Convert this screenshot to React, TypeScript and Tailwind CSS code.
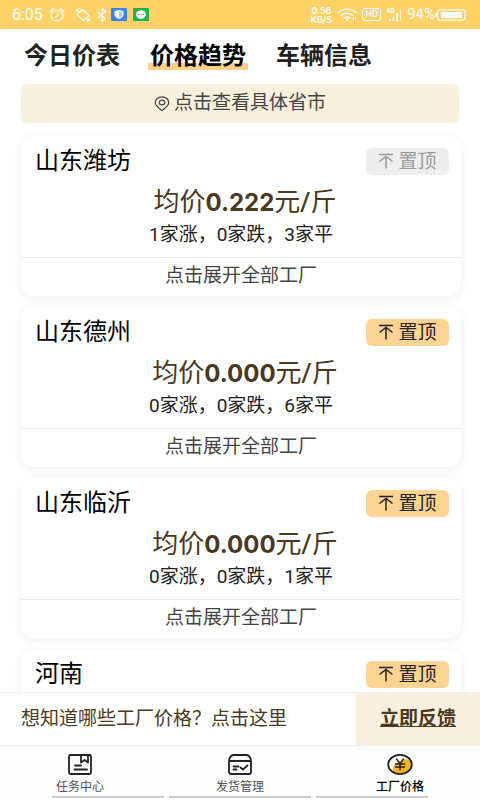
import type { ReactNode } from "react";
import clsx from "clsx";

type Trend = { price: string; up: number; down: number; flat: number };
type Factory = { name: string; pinned?: boolean; trend?: Trend };

const tabs = ["今日价表", "价格趋势", "车辆信息"];

const factories: Factory[] = [
  { name: "山东潍坊", pinned: true, trend: { price: "0.222", up: 1, down: 0, flat: 3 } },
  { name: "山东德州", trend: { price: "0.000", up: 0, down: 0, flat: 6 } },
  { name: "山东临沂", trend: { price: "0.000", up: 0, down: 0, flat: 1 } },
  { name: "河南" },
];

function StatusBar() {
  return (
    <div className="flex h-[29px] shrink-0 items-center justify-between bg-[#ffd166] pr-[14px] pl-3 text-white">
      <div className="flex items-center gap-[6px]">
        <span className="text-base">6:05</span>
        <svg className="h-4 w-4" viewBox="0 0 16 16" fill="none" stroke="currentColor" strokeWidth="1.2" strokeLinecap="round">
          <ellipse cx="8" cy="8.5" rx="6" ry="5.5" />
          <path d="M9 5.5v3L6 10.5M1 4.5l3.5-3M15 4.5l-3.5-3" />
        </svg>
        <svg className="ml-1 h-4 w-4" viewBox="0 0 16 16" fill="none" stroke="currentColor" strokeWidth="1.2" strokeLinecap="round" strokeLinejoin="round">
          <path d="M7.5 2.5L14 8.5 8.5 13.500 2 7.500zM1 4.500l3-3M1.500 2.500l2 2M15 11.500l-3 3M12.500 12l2 2" />
        </svg>
        <svg className="h-4 w-[10px]" viewBox="0 0 10 16" fill="none" stroke="currentColor" strokeWidth="1.1">
          <path d="M.5 5l8 6.500L5 14.500v-13l3.500 3L.5 11" />
        </svg>
        <svg className="-ml-[2px] h-[13px] w-4" viewBox="0 0 16 13">
          <rect width="16" height="13" rx="1" fill="#3b82f6" />
          <path d="M8 2l4.500 1.200v3.300c0 2.200-2 3.800-4.500 4.500-2.500-.7-4.500-2.300-4.500-4.500V3.200z" fill="#fff" />
          <path d="M8 3.200l3.500.9v2.400c0 1.600-1.500 2.800-3.500 3.400z" fill="#a9c9fb" />
        </svg>
        <svg className="h-[13px] w-4" viewBox="0 0 16 13">
          <rect width="16" height="13" rx="1" fill="#22b14c" />
          <ellipse cx="8" cy="6.500" rx="5" ry="4.200" fill="#fff" />
          <path d="M5 6.500h1.200M7.400 6.500h1.200M9.800 6.500H11" stroke="#22b14c" strokeWidth="1.2" />
        </svg>
      </div>
      <div className="flex items-center gap-[5px]">
        <div className="text-center font-[Inter,sans-serif] text-[9px] leading-[9px] font-semibold">
          <div>0.56</div>
          <div>KB/S</div>
        </div>
        <svg className="h-[13px] w-5" viewBox="0 0 20 13" fill="none" stroke="currentColor" strokeWidth="1.4" strokeLinecap="round">
          <path d="M1 4.500c5-4.500 13-4.500 18 0M4 7.500c3.500-3 8.500-3 12 0M7 10c2-1.500 4-1.500 6 0" />
          <circle cx="10" cy="11.500" r=".6" fill="currentColor" />
          <path d="M16.500 9.500v2.500M18.500 9.500v1" strokeWidth="1.1" />
        </svg>
        <span className="flex h-[13px] w-[19px] items-center justify-center rounded-[3px] border border-white text-[9px] leading-[9px] font-medium">HD</span>
        <svg className="h-4 w-4" viewBox="0 0 16 16" fill="currentColor">
          <text x="0" y="6" fontSize="7" fontWeight="700">4G</text>
          <path d="M3 12h2v2H3zM6.500 9.500h2V14h-2zM10 6h2v8h-2z" />
          <path d="M14 2h1v12h-1z" opacity=".7" />
        </svg>
        <div className="flex items-center">
          <span className="text-[15px]">94%</span>
          <svg className="h-3 w-[31px]" viewBox="0 0 31 12" fill="none">
            <rect x="2.500" y=".8" width="27.500" height="10.400" rx="2.500" stroke="currentColor" strokeWidth="1.2" />
            <path d="M6 3h21v6H6zM.5 4h2v4h-2z" fill="currentColor" />
          </svg>
        </div>
      </div>
    </div>
  );
}

function TrendLines({ price, up, down, flat }: Trend) {
  return (
    <>
      <p className="pl-2 text-center text-[26px] leading-8 text-[#4a3820]">
        均价<b className="font-[Inter,sans-serif] text-[24px]">{price}</b>元<span className="font-medium">/</span>斤
      </p>
      <p className="mt-1 h-[34px] text-center text-[19px] leading-6 text-[#222222]">
        {up}家涨，{down}家跌，{flat}家平
      </p>
      <button className="h-9 w-full border-t border-[#ebebeb] text-[19px] leading-6 text-[#444444]">点击展开全部工厂</button>
    </>
  );
}

function FactoryCard({ name, pinned, trend }: Factory) {
  return (
    <section className="h-40 shrink-0 rounded-xl bg-white shadow-[0_2px_10px_rgba(0,0,0,0.07)]">
      <div className="flex h-[50px] items-center justify-between pr-3 pl-[14px]">
        <h2 className="text-[24px] leading-6 text-black">{name}</h2>
        <button
          className={clsx(
            "flex h-[27px] w-[83px] items-center justify-center gap-1 rounded-md text-[19px] leading-[27px]",
            pinned ? "bg-[#eeeeee] text-[#999999]" : "bg-[#ffd391] text-[#222222]",
          )}
        >
          <svg className="h-4 w-4" viewBox="0 0 16 16" fill="none" stroke="currentColor" strokeWidth="1.5">
            <path d="M1 1.500h14M8 15.500V4M1.500 8.500L8 3.500l6.500 5" />
          </svg>
          置顶
        </button>
      </div>
      {trend && <TrendLines {...trend} />}
    </section>
  );
}

function NavItem({ label, active, children }: { label: string; active?: boolean; children: ReactNode }) {
  return (
    <a href="#" className={clsx("flex flex-1 flex-col items-center pt-[7px]", active ? "font-medium text-black" : "text-[#555555]")}>
      <svg className="h-6 w-[26px] text-[#222222]" viewBox="0 0 26 24" fill="none" stroke="currentColor" strokeWidth="1.8" strokeLinecap="round" strokeLinejoin="round">
        {children}
      </svg>
      <span className="mt-[2px] text-xs leading-4">{label}</span>
    </a>
  );
}

export default function App() {
  return (
    <div className="flex h-screen flex-col overflow-hidden bg-white font-[Roboto,'Noto_Sans_CJK_SC',sans-serif]">
      <StatusBar />
      <nav className="flex h-[53px] shrink-0 items-center gap-[26px] px-[22px]">
        {tabs.map((tab, i) => (
          <button
            key={tab}
            className={clsx(
              "h-7 px-[2px] text-[24px] leading-7 font-bold",
              i === 1 ? "bg-linear-to-t from-[#ffd08a] from-25% to-transparent to-25% text-black" : "text-[#222222]",
            )}
          >
            {tab}
          </button>
        ))}
      </nav>
      <button className="mx-[21px] mt-[2px] flex h-[39px] shrink-0 items-center justify-center gap-1 rounded-md bg-[#f9efdd] text-[19px] text-[#444444]">
        <svg className="h-4 w-4" viewBox="0 0 16 16" fill="none" stroke="currentColor" strokeWidth="1.2">
          <path d="M8 14.500C5 12.200 1.200 9.800 1.200 6.500a6.800 5.700 0 0 1 13.600 0C14.800 9.800 11 12.200 8 14.500z" />
          <ellipse cx="8" cy="6.500" rx="2.800" ry="2.300" />
        </svg>
        点击查看具体省市
      </button>
      <main className="flex min-h-0 flex-1 [scrollbar-width:none] flex-col gap-[11px] overflow-y-auto pt-[13px] pr-[19px] pl-[21px]">
        {factories.map((factory) => (
          <FactoryCard key={factory.name} {...factory} />
        ))}
      </main>
      <div className="flex h-[53px] shrink-0 items-center border-t border-[#eeeeee] bg-white text-[19px] text-[#4a3820]">
        <span className="flex-1 pl-[21px]">想知道哪些工厂价格？点击这里</span>
        <a href="#" className="flex h-full w-[124px] items-center justify-center bg-[#f9efdd] font-bold underline">
          立即反馈
        </a>
      </div>
      <footer className="h-[55px] shrink-0 border-t border-[#eeeeee] bg-[#fdfdfd]">
        <nav className="flex h-[50px]">
          <NavItem label="任务中心">
            <rect x="2" y="2" width="22" height="19" rx="1.5" />
            <path d="M14 2v7.500l3.500-2.500L21 9.500V2M8 12.500h6M7.500 16.500H20" />
          </NavItem>
          <NavItem label="发货管理">
            <path d="M2 8c0-3 2-6 4.500-6h13C22 2 24 5 24 8v11a2 2 0 0 1-2 2H4a2 2 0 0 1-2-2zM2 8h22M6.500 13.500h5M6.500 16.500h3M13.500 14.500l2.500 2 4.500-4" />
          </NavItem>
          <NavItem label="工厂价格" active>
            <path d="M5.500 17C6 11 12 8 18 6.500c4-1 6.500 1 6.500 5 0 5-5 9.500-11.500 9.500-3 0-6-1.500-7.500-4z" fill="#fbb321" stroke="none" />
            <ellipse cx="13" cy="11.500" rx="11.800" ry="9.600" />
            <path d="M9.500 6l3.500 4.500L16.500 6M13 10.500V17M8.500 11h9M8.500 14h9" strokeWidth="1.4" />
          </NavItem>
        </nav>
        <div className="mx-[52px] flex gap-[5px]">
          <span className="h-[2px] flex-[112] bg-[#cccccc]" />
          <span className="h-[2px] flex-[142] bg-[#cccccc]" />
          <span className="h-[2px] flex-[112] bg-[#cccccc]" />
        </div>
      </footer>
    </div>
  );
}
